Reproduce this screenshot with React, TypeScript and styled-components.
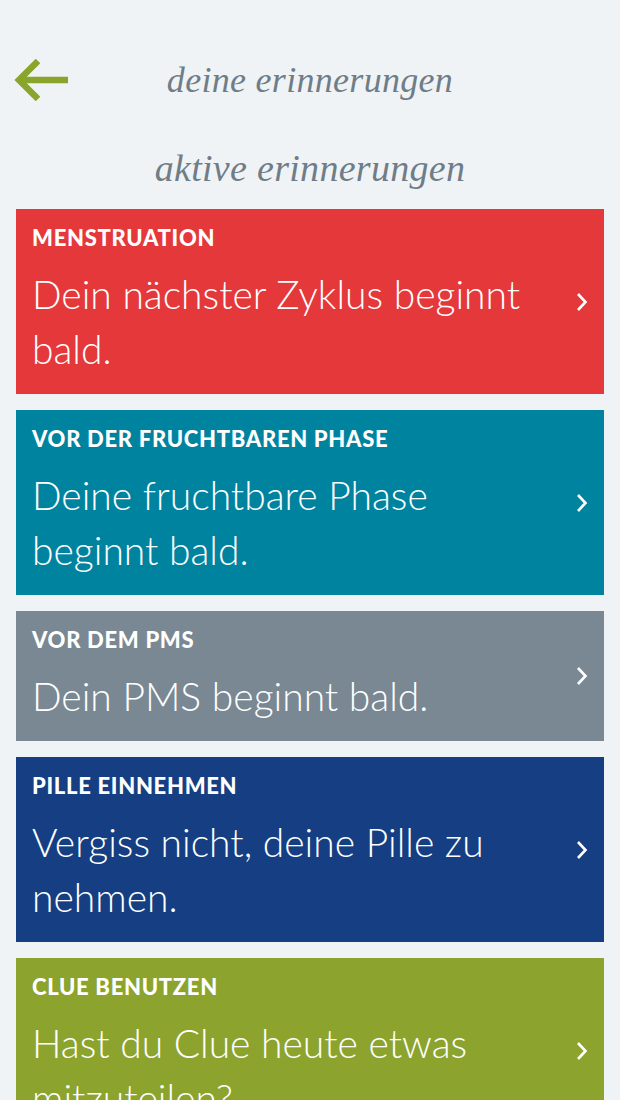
import React from 'react';
import styled, { createGlobalStyle } from 'styled-components';

const reminders = [
  { label: 'MENSTRUATION', text: 'Dein nächster Zyklus beginnt bald.', color: '#e4383b' },
  { label: 'VOR DER FRUCHTBAREN PHASE', text: 'Deine fruchtbare Phase beginnt bald.', color: '#00839e' },
  { label: 'VOR DEM PMS', text: 'Dein PMS beginnt bald.', color: '#798893' },
  { label: 'PILLE EINNEHMEN', text: 'Vergiss nicht, deine Pille zu nehmen.', color: '#153f82' },
  { label: 'CLUE BENUTZEN', text: 'Hast du Clue heute etwas mitzuteilen?', color: '#8ca42e' },
];

const App: React.FC = () => (
  <>
    <GlobalStyle />
    <Page>
      <Header>
        <BackButton type="button" aria-label="zurück">
          <svg width="56" height="46" viewBox="0 0 56 46">
            <path d="M54 23 H6 M24 4 L5 23 L24 42" fill="none" stroke="#8aa52c" strokeWidth="6.5" />
          </svg>
        </BackButton>
        <Title>deine erinnerungen</Title>
      </Header>
      <Section>aktive erinnerungen</Section>
      <List>
        {reminders.map(r => (
          <Card key={r.label} bg={r.color}>
            <CardBody>
              <Label>{r.label}</Label>
              <Text>{r.text}</Text>
            </CardBody>
            <Chevron width="12" height="22" viewBox="0 0 12 22">
              <path d="M2 3 L9.5 11 L2 19" fill="none" stroke="#ffffff" strokeWidth="2.6" />
            </Chevron>
          </Card>
        ))}
      </List>
    </Page>
  </>
);

const GlobalStyle = createGlobalStyle`
  html, body {
    margin: 0;
    padding: 0;
    background: #eff3f5;
    height: 1100px;
    overflow: hidden;
  }
`;

const Page = styled.div`
  background: #eff3f5;
  min-height: 1100px;
  font-family: Lato, 'Open Sans', sans-serif;
`;

const Header = styled.div`
  position: relative;
  display: flex;
  align-items: center;
  justify-content: center;
  height: 56px;
  padding-top: 52px;
`;

const BackButton = styled.button`
  position: absolute;
  left: 14px;
  top: 57px;
  background: none;
  border: none;
  padding: 0;
  display: flex;
`;

const Title = styled.h1`
  margin: 0;
  font-family: 'Liberation Serif', serif;
  font-style: italic;
  font-weight: 400;
  font-size: 36px;
  color: #6f7d88;
  letter-spacing: 0.3px;
`;

const Section = styled.h2`
  margin: 0;
  padding: 38px 0 19px;
  text-align: center;
  font-family: 'Liberation Serif', serif;
  font-style: italic;
  font-weight: 400;
  font-size: 38px;
  color: #6f7d88;
  letter-spacing: 0.3px;
`;

const List = styled.div`
  display: flex;
  flex-direction: column;
  gap: 16px;
  padding: 0 16px;
`;

const Card = styled.div<{ bg: string }>`
  display: flex;
  align-items: center;
  background: ${p => p.bg};
  color: #ffffff;
  padding: 15px 16px 17px 16px;
`;

const CardBody = styled.div`
  flex: 1;
  min-width: 0;
`;

const Label = styled.div`
  font-weight: 900;
  font-size: 22px;
  line-height: 28px;
  letter-spacing: 0.7px;
`;

const Text = styled.div`
  margin-top: 15px;
  font-weight: 300;
  font-size: 39px;
  line-height: 55px;
  padding-right: 30px;
`;

const Chevron = styled.svg`
  flex: none;
  margin-top: 2px;
`;

export default App;
